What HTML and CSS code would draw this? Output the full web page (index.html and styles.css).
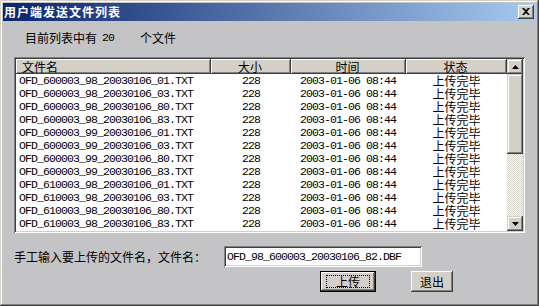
FILE: index.html
```html
<!DOCTYPE html>
<html>
<head>
<meta charset="utf-8">
<link rel="stylesheet" href="styles.css">
</head>
<body>
<div class="window">
  <div class="titlebar">
    <span class="title">用户端发送文件列表</span>
    <span class="close"><svg width="8" height="7" viewBox="0 0 8 7"><path d="M0 0h2l2 2 2-2h2L5 3.5 8 7H6L4 5 2 7H0l3-3.5z" fill="#000"/></svg></span>
  </div>
  <div class="info">
    <span class="cjk">目前列表中有</span><span class="mono count">20</span><span class="cjk unit">个文件</span>
  </div>
  <div class="listbox">
    <div class="listmain">
      <div class="head">
        <div class="hcell left">文件名</div>
        <div class="hcell">大小</div>
        <div class="hcell">时间</div>
        <div class="hcell">状态</div>
      </div>
      <div class="rows">
        <div class="row"><span class="c1">OFD_600003_98_20030106_01.TXT</span><span class="c2">228</span><span class="c3">2003-01-06 08:44</span><span class="c4">上传完毕</span></div>
        <div class="row"><span class="c1">OFD_600003_98_20030106_03.TXT</span><span class="c2">228</span><span class="c3">2003-01-06 08:44</span><span class="c4">上传完毕</span></div>
        <div class="row"><span class="c1">OFD_600003_98_20030106_80.TXT</span><span class="c2">228</span><span class="c3">2003-01-06 08:44</span><span class="c4">上传完毕</span></div>
        <div class="row"><span class="c1">OFD_600003_98_20030106_83.TXT</span><span class="c2">228</span><span class="c3">2003-01-06 08:44</span><span class="c4">上传完毕</span></div>
        <div class="row"><span class="c1">OFD_600003_99_20030106_01.TXT</span><span class="c2">228</span><span class="c3">2003-01-06 08:44</span><span class="c4">上传完毕</span></div>
        <div class="row"><span class="c1">OFD_600003_99_20030106_03.TXT</span><span class="c2">228</span><span class="c3">2003-01-06 08:44</span><span class="c4">上传完毕</span></div>
        <div class="row"><span class="c1">OFD_600003_99_20030106_80.TXT</span><span class="c2">228</span><span class="c3">2003-01-06 08:44</span><span class="c4">上传完毕</span></div>
        <div class="row"><span class="c1">OFD_600003_99_20030106_83.TXT</span><span class="c2">228</span><span class="c3">2003-01-06 08:44</span><span class="c4">上传完毕</span></div>
        <div class="row"><span class="c1">OFD_610003_98_20030106_01.TXT</span><span class="c2">228</span><span class="c3">2003-01-06 08:44</span><span class="c4">上传完毕</span></div>
        <div class="row"><span class="c1">OFD_610003_98_20030106_03.TXT</span><span class="c2">228</span><span class="c3">2003-01-06 08:44</span><span class="c4">上传完毕</span></div>
        <div class="row"><span class="c1">OFD_610003_98_20030106_80.TXT</span><span class="c2">228</span><span class="c3">2003-01-06 08:44</span><span class="c4">上传完毕</span></div>
        <div class="row"><span class="c1">OFD_610003_98_20030106_83.TXT</span><span class="c2">228</span><span class="c3">2003-01-06 08:44</span><span class="c4">上传完毕</span></div>
      </div>
    </div>
    <div class="vscroll">
      <div class="sbtn"><svg width="7" height="4" viewBox="0 0 7 4"><path d="M3.5 0L7 4H0z" fill="#000"/></svg></div>
      <div class="thumb"></div>
      <div class="track"></div>
      <div class="sbtn"><svg width="7" height="4" viewBox="0 0 7 4"><path d="M0 0h7L3.5 4z" fill="#000"/></svg></div>
    </div>
  </div>
  <div class="inputrow">
    <span class="cjk">手工输入要上传的文件名，文件名：</span>
    <div class="field mono">OFD_98_600003_20030106_82.DBF</div>
  </div>
  <div class="buttons">
    <div class="btn default"><span class="focus">上传</span></div>
    <div class="btn exit">退出</div>
  </div>
</div>
</body>
</html>
```
FILE: styles.css
```css
* { box-sizing: border-box; }
html, body { margin: 0; padding: 0; }
body {
  width: 539px;
  height: 306px;
  overflow: hidden;
  font-family: "Noto Sans CJK SC", "Liberation Sans", sans-serif;
  font-size: 12px;
  color: #000;
}
.cjk { font-family: "Noto Sans CJK SC", sans-serif; }
.mono {
  font-family: "Liberation Mono", "DejaVu Sans Mono", monospace;
  font-size: 11.5px;
  letter-spacing: -0.9px;
}
.window {
  width: 539px;
  height: 306px;
  background: #c4c3c6;
  padding: 3px;
  box-shadow: inset -1px -1px #404040, inset 1px 1px #d4d0c8, inset -2px -2px #808080, inset 2px 2px #ffffff;
  display: flex;
  flex-direction: column;
}
.titlebar {
  height: 18px;
  background: linear-gradient(to right, #0a246a, #a6caf0);
  display: flex;
  align-items: center;
  justify-content: space-between;
  padding: 0 2px 0 1px;
}
.title {
  color: #fff;
  font-weight: bold;
  font-size: 12px;
  letter-spacing: 1px;
  line-height: 16px;
}
.close {
  width: 16px;
  height: 14px;
  background: #d4d0c8;
  box-shadow: inset -1px -1px #404040, inset 1px 1px #ffffff, inset -2px -2px #808080;
  display: flex;
  align-items: center;
  justify-content: center;
  padding-bottom: 1px;
}
.close svg { display: block; }
.info {
  margin: 9px 0 0 22px;
  height: 16px;
  line-height: 16px;
  display: flex;
  align-items: center;
}
.count { margin-left: 5px; }
.unit { margin-left: 26px; }
.listbox {
  margin: 11px 0 0 11px;
  width: 511px;
  height: 176px;
  padding: 2px;
  background: #fff;
  box-shadow: inset 1px 1px #808080, inset -1px -1px #ffffff, inset 2px 2px #404040, inset -2px -2px #d4d0c8;
  display: flex;
}
.listmain {
  width: 491px;
  overflow: hidden;
}
.head {
  display: grid;
  grid-template-columns: 195px 80px 115px 101px;
  height: 15px;
}
.hcell {
  background: #d4d0c8;
  box-shadow: inset -1px -1px #404040, inset 1px 1px #ffffff, inset -2px -2px #808080;
  text-align: center;
  line-height: 15px;
  height: 15px;
  font-size: 12px;
  padding-right: 2px;
}
.hcell.left { text-align: left; padding-left: 6px; }
.row {
  display: grid;
  grid-template-columns: 195px 80px 115px 101px;
  height: 13px;
  line-height: 13px;
  font-family: "Liberation Mono", "DejaVu Sans Mono", monospace;
  font-size: 11.5px;
}
.row span { white-space: nowrap; }
.c1 { padding-left: 3px; letter-spacing: -0.9px; }
.c2 { text-align: center; letter-spacing: -0.9px; }
.c3 { text-align: center; letter-spacing: -0.9px; padding-right: 1px; }
.c4 { text-align: center; font-family: "Noto Sans CJK SC", sans-serif; font-size: 12px; line-height: 13px; }
.vscroll {
  width: 16px;
  display: flex;
  flex-direction: column;
}
.sbtn {
  height: 15px;
  background: #d4d0c8;
  box-shadow: inset -1px -1px #404040, inset 1px 1px #d4d0c8, inset -2px -2px #808080, inset 2px 2px #ffffff;
  display: flex;
  align-items: center;
  justify-content: center;
}
.sbtn svg { display: block; }
.thumb {
  height: 80px;
  background: #d4d0c8;
  box-shadow: inset -1px -1px #404040, inset 1px 1px #d4d0c8, inset -2px -2px #808080, inset 2px 2px #ffffff;
}
.track {
  flex: 1;
  background: repeating-conic-gradient(#d4d0c8 0 25%, #ffffff 0 50%) 0 0 / 2px 2px;
}
.inputrow {
  margin: 13px 0 0 11px;
  display: flex;
  align-items: center;
  height: 21px;
}
.inputrow .cjk { width: 210px; }
.field {
  width: 198px;
  height: 21px;
  background: #fff;
  line-height: 21px;
  padding-left: 3px;
  box-shadow: inset 1px 1px #808080, inset -1px -1px #ffffff, inset 2px 2px #404040, inset -2px -2px #d4d0c8;
  white-space: nowrap;
  overflow: hidden;
}
.buttons {
  margin: 4px 0 0 317px;
  display: flex;
  gap: 35px;
}
.btn {
  height: 21px;
  background: #d4d0c8;
  display: flex;
  align-items: center;
  justify-content: center;
  font-size: 12px;
  box-shadow: inset -1px -1px #404040, inset 1px 1px #ffffff, inset -2px -2px #808080;
}
.btn.default {
  width: 56px;
  box-shadow: inset 0 0 0 1px #000, inset -2px -2px #404040, inset 2px 2px #ffffff, inset -3px -3px #808080;
}
.focus {
  width: 44px;
  height: 13px;
  border: 1px dotted #000;
  display: flex;
  align-items: center;
  justify-content: center;
  line-height: 11px;
}
.btn.exit { width: 42px; }
```
